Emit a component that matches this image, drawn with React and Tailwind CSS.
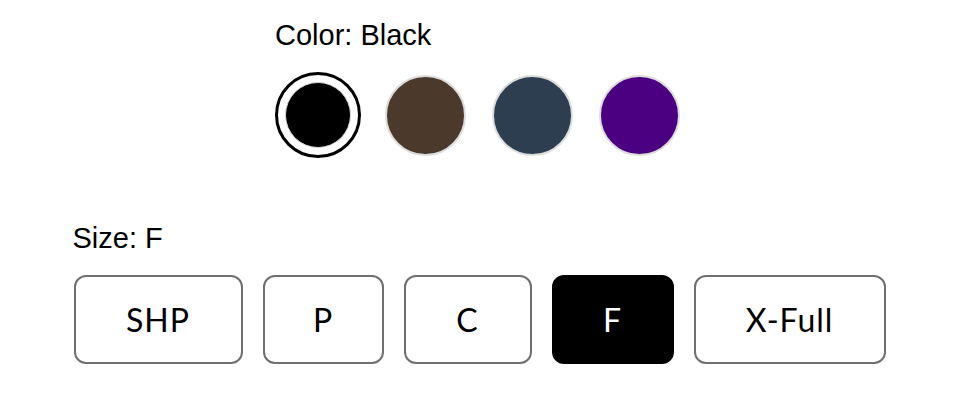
import React, { useState } from 'react';

const colors = [
    { name: 'Black', hex: 'bg-[#000000]' },
    { name: 'Brown', hex: 'bg-[#4b3a2c]' },
    { name: 'Navy', hex: 'bg-[#2c3e50]' },
    { name: 'Purple', hex: 'bg-[#4b0082]' },
];

const sizes = [
    { label: 'SHP', width: 'w-[169px]' },
    { label: 'P', width: 'w-[121px]' },
    { label: 'C', width: 'w-[128px]' },
    { label: 'F', width: 'w-[122px]' },
    { label: 'X-Full', width: 'w-[192px]' },
];

const App = () => {
    const [color, setColor] = useState('Black');
    const [size, setSize] = useState('F');

    return (
        <div className="w-[960px] h-[418px] bg-white flex flex-col items-center pt-[18px] font-['Liberation_Sans',Arial,sans-serif] text-black">
            {/* Color picker */}
            <div className="w-fit -ml-[3px]">
                <p className="text-[29px] leading-[34px]">Color: {color}</p>
                <div className="flex items-center gap-[21px] mt-[20px]">
                    {colors.map((c) => (
                        <button
                            key={c.name}
                            onClick={() => setColor(c.name)}
                            className="w-[86px] h-[86px] flex items-center justify-center"
                        >
                            {c.name === color ? (
                                <span className="w-[86px] h-[86px] rounded-full border-[3px] border-black flex items-center justify-center">
                                    <span className={`w-[66px] h-[66px] rounded-full border border-[#d8d8d8] ${c.hex}`} />
                                </span>
                            ) : (
                                <span className={`w-[81px] h-[81px] rounded-full border-2 border-[#dcdcdc] ${c.hex}`} />
                            )}
                        </button>
                    ))}
                </div>
            </div>

            {/* Size picker */}
            <div className="w-fit mt-[63px] -ml-[1px]">
                <p className="text-[29px] leading-[34px] -ml-[1px]">Size: {size}</p>
                <div className="flex gap-[20px] mt-[20px] font-['Lato',sans-serif]">
                    {sizes.map((s) => (
                        <button
                            key={s.label}
                            onClick={() => setSize(s.label)}
                            className={`${s.width} h-[89px] rounded-[12px] border-2 text-[32px] tracking-[1px] ${s.label === size
                                ? 'bg-black border-black text-white'
                                : 'bg-white border-[#707070] text-black'
                                }`}
                        >
                            {s.label}
                        </button>
                    ))}
                </div>
            </div>
        </div>
    );
};

export default App;
